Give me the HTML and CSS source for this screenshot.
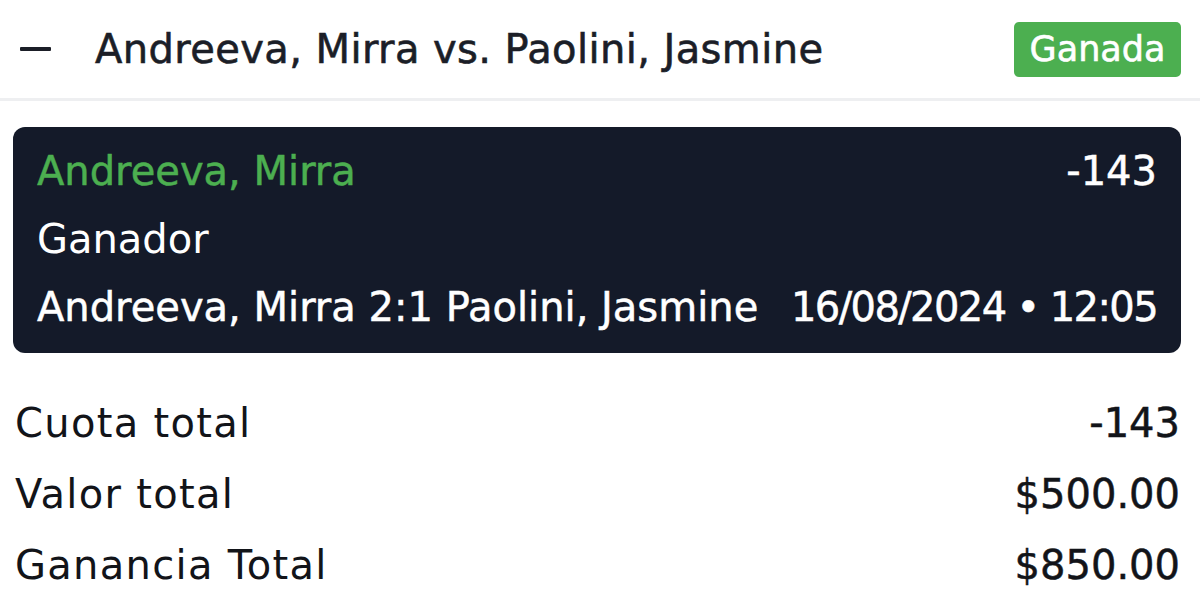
FILE: index.html
```html
<!DOCTYPE html>
<html lang="es">
<head>
    <meta charset="UTF-8">
    <meta name="viewport" content="width=1200, initial-scale=1.0">
    <title>Apuesta</title>
    <link rel="stylesheet" href="styles.css">
</head>
<body>
    <header class="bet-header">
        <span class="collapse"></span>
        <h1 class="bet-title">Andreeva, Mirra vs. Paolini, Jasmine</h1>
        <span class="badge">Ganada</span>
    </header>

    <section class="ticket">
        <div class="ticket-row strong">
            <span class="pick">Andreeva, Mirra</span>
            <span>-143</span>
        </div>
        <div class="ticket-row">
            <span>Ganador</span>
        </div>
        <div class="ticket-row strong">
            <span>Andreeva, Mirra 2:1 Paolini, Jasmine</span>
            <span class="date">16/08/2024 • 12:05</span>
        </div>
    </section>

    <section class="summary">
        <div class="summary-row">
            <span class="label">Cuota total</span>
            <span class="amount">-143</span>
        </div>
        <div class="summary-row">
            <span class="label">Valor total</span>
            <span class="amount">$500.00</span>
        </div>
        <div class="summary-row">
            <span class="label">Ganancia Total</span>
            <span class="amount">$850.00</span>
        </div>
    </section>
</body>
</html>
```

FILE: styles.css
```css
body {
    font-family: "DejaVu Sans", Verdana, sans-serif;
    background: #fff;
    color: #1b1e27;
    margin: 0;
    padding: 0;
}
.bet-header {
    display: flex;
    align-items: center;
    height: 101px;
    padding: 0 19px 0 20px;
    border-bottom: 3px solid #eeeff1;
    box-sizing: border-box;
}
.collapse {
    width: 31px;
    height: 4px;
    background: #1b1e27;
    border-radius: 1px;
}
.bet-title {
    margin: 0 0 0 44px;
    font-size: 40px;
    font-weight: normal;
    letter-spacing: 0.4px;
    -webkit-text-stroke: 0.6px currentColor;
}
.badge {
    margin-left: auto;
    width: 167px;
    height: 55px;
    display: flex;
    align-items: center;
    justify-content: center;
    background: #4caf50;
    color: #fff;
    border-radius: 5px;
    font-size: 35px;
    -webkit-text-stroke: 0.6px currentColor;
}
.ticket {
    margin: 26px 19px 0 13px;
    height: 226px;
    box-sizing: border-box;
    padding: 10px 24px 0 24px;
    background: #141a29;
    border-radius: 12px;
    color: #fff;
    font-size: 40px;
}
.ticket-row {
    display: flex;
    justify-content: space-between;
    height: 68px;
    align-items: center;
}
.strong {
    -webkit-text-stroke: 0.5px currentColor;
}
.pick {
    color: #4caf50;
}
.date {
    letter-spacing: -1.6px;
}
.summary {
    padding: 34px 20px 0 15px;
    font-size: 40px;
    color: #121419;
}
.summary-row {
    display: flex;
    justify-content: space-between;
    align-items: center;
    height: 71px;
}
.label {
    letter-spacing: 1.3px;
}
.amount {
    -webkit-text-stroke: 0.5px currentColor;
}
```
